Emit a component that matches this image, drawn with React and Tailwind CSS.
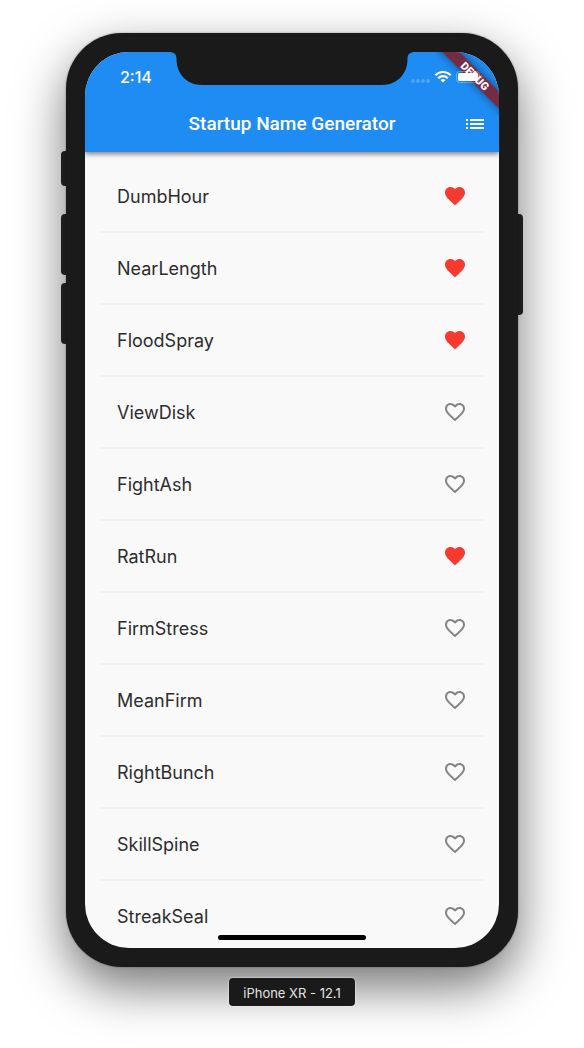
import { useState } from 'react'

const names = [
  'DumbHour',
  'NearLength',
  'FloodSpray',
  'ViewDisk',
  'FightAsh',
  'RatRun',
  'FirmStress',
  'MeanFirm',
  'RightBunch',
  'SkillSpine',
  'StreakSeal',
]

function Heart({ filled }) {
  return (
    <svg viewBox="0 0 24 24" className="size-6" fill="currentColor" aria-hidden="true">
      {filled ? (
        <path d="M12 21.35l-1.45-1.32C5.4 15.36 2 12.28 2 8.5 2 5.42 4.42 3 7.5 3c1.74 0 3.41.81 4.5 2.09C13.09 3.81 14.76 3 16.5 3 19.58 3 22 5.42 22 8.5c0 3.78-3.4 6.86-8.55 11.54L12 21.35z" />
      ) : (
        <path d="M16.5 3c-1.74 0-3.41.81-4.5 2.09C10.91 3.81 9.24 3 7.5 3 4.42 3 2 5.42 2 8.5c0 3.78 3.4 6.86 8.55 11.54L12 21.35l1.45-1.32C18.6 15.36 22 12.28 22 8.5 22 5.42 19.58 3 16.5 3zm-4.4 15.55l-.1.1-.1-.1C7.14 14.24 4 11.39 4 8.5 4 6.5 5.5 5 7.5 5c1.54 0 3.04.99 3.57 2.36h1.87C13.46 5.99 14.96 5 16.5 5c2 0 3.5 1.5 3.5 3.5 0 2.89-3.14 5.74-7.9 10.05z" />
      )}
    </svg>
  )
}

function Notch() {
  return (
    <svg
      viewBox="0 0 246 33"
      className="absolute top-0 left-1/2 h-[33px] w-[246px] -translate-x-1/2"
      fill="#1a1a1a"
      aria-hidden="true"
    >
      <path d="M0 0h246c-5 0-7.500 2-7.500 7C238.500 22 228 33 213 33H33C18 33 7.500 22 7.500 7 7.500 2 5 0 0 0z" />
    </svg>
  )
}

function DebugBanner() {
  return (
    <svg viewBox="0 0 64 64" className="pointer-events-none absolute top-0 right-0 size-16">
      <g transform="translate(64 0) rotate(45)">
        <rect
          x="-50"
          y="28"
          width="100"
          height="12"
          fill="#752c43"
          className="drop-shadow-[0_0_4px_rgba(0,0,0,0.5)]"
        />
        <text
          x="0"
          y="38"
          textAnchor="middle"
          fill="#fff"
          className="font-['Roboto',sans-serif] text-[11px] font-black"
        >
          DEBUG
        </text>
      </g>
    </svg>
  )
}

function StatusIcons() {
  return (
    <svg viewBox="0 0 72 14" className="h-[14px] w-[72px]" fill="#fff" aria-hidden="true">
      <g opacity="0.22">
        <circle cx="2" cy="11" r="1.900" />
        <circle cx="7" cy="11" r="1.900" />
        <circle cx="12" cy="11" r="1.900" />
        <circle cx="17" cy="11" r="1.900" />
      </g>
      <g fill="none" stroke="#fff" strokeWidth="2.200">
        <path d="M24.300 5.200a10.900 10.900 0 0 1 15.400 0" />
        <path d="M27.200 8.200a6.800 6.800 0 0 1 9.600 0" />
      </g>
      <path d="M32 12.600l-2.500-2.500a3.600 3.600 0 0 1 5 0z" />
      <rect x="45.500" y="1.500" width="23" height="11" rx="3" fill="none" stroke="#fff" opacity="0.300" />
      <rect x="47" y="3" width="20" height="8" rx="1.500" />
      <path d="M70 5v4c1-.400 1.500-1.100 1.500-2S71 5.400 70 5z" opacity="0.300" />
    </svg>
  )
}

export default function App() {
  const [saved, setSaved] = useState(['DumbHour', 'NearLength', 'FloodSpray', 'RatRun'])

  function toggle(name) {
    setSaved(saved.includes(name) ? saved.filter((n) => n !== name) : [...saved, name])
  }

  return (
    <div className="min-h-screen overflow-hidden bg-white font-['Inter','Liberation_Sans',sans-serif]">
      <div className="mx-auto max-w-[584px] px-[66px] pt-[33px] pb-10">
        <div className="relative">
          <div className="absolute top-[118px] -left-[5px] h-[35px] w-2 rounded-sm bg-[#272727]" />
          <div className="absolute top-[181px] -left-[5px] h-[61px] w-2 rounded-sm bg-[#272727]" />
          <div className="absolute top-[250px] -left-[5px] h-[61px] w-2 rounded-sm bg-[#272727]" />
          <div className="absolute top-[181px] -right-[5px] h-[101px] w-2 rounded-sm bg-[#272727]" />

          <div className="relative rounded-[56px] bg-[#1a1a1a] p-[19px] shadow-[0_20px_50px_rgba(0,0,0,0.55),0_0_2px_rgba(0,0,0,0.4)]">
            <div className="relative overflow-hidden rounded-[44px] bg-[#f9f9f9]">
              <header className="relative bg-[#1f8cf3] text-white shadow-[0_2px_5px_rgba(0,0,0,0.5)]">
                <DebugBanner />
                <div className="relative flex h-11 items-center justify-between pt-1.5 pr-4 pl-[35px]">
                  <span className="text-base leading-5 font-medium">2:14</span>
                  <StatusIcons />
                </div>
                <div className="relative flex h-14 items-center justify-center">
                  <h1 className="font-['Roboto',sans-serif] text-[19px] leading-6 font-medium">
                    Startup Name Generator
                  </h1>
                  <button
                    type="button"
                    aria-label="Saved suggestions"
                    className="absolute right-0 flex size-12 items-center justify-center"
                  >
                    <svg viewBox="0 0 24 24" className="size-6" fill="currentColor" aria-hidden="true">
                      <path d="M3 13h2v-2H3v2zm0 4h2v-2H3v2zm0-8h2V7H3v2zm4 4h14v-2H7v2zm0 4h14v-2H7v2zM7 7v2h14V7H7z" />
                    </svg>
                  </button>
                </div>
                <Notch />
              </header>

              <ul className="px-4 pt-4 pb-1">
                {names.map((name, i) => (
                  <li key={name}>
                    {i > 0 && (
                      <div className="flex h-4 items-center">
                        <div className="h-[2px] w-full bg-[#efefef]" />
                      </div>
                    )}
                    <div className="flex h-14 items-center justify-between px-4">
                      <span className="pt-0.5 text-lg text-[#2d2d2d]">{name}</span>
                      <button
                        type="button"
                        aria-label={`Save ${name}`}
                        aria-pressed={saved.includes(name)}
                        onClick={() => toggle(name)}
                        className={saved.includes(name) ? 'text-[#f43b30]' : 'text-[#858585]'}
                      >
                        <Heart filled={saved.includes(name)} />
                      </button>
                    </div>
                  </li>
                ))}
              </ul>
              <div className="absolute bottom-2 left-1/2 h-[5px] w-[148px] -translate-x-1/2 rounded-full bg-black" />
            </div>
          </div>
        </div>

        <div className="relative mt-[11px] flex justify-center">
          <span className="rounded-[4px] bg-[#1a1a1a] px-3.5 pt-[5px] pb-[3px] text-[13px] leading-5 text-[#e4e4e4] shadow-[0_0_1px_1px_rgba(255,255,255,0.35)]">
            iPhone XR - 12.1
          </span>
        </div>
      </div>
    </div>
  )
}
